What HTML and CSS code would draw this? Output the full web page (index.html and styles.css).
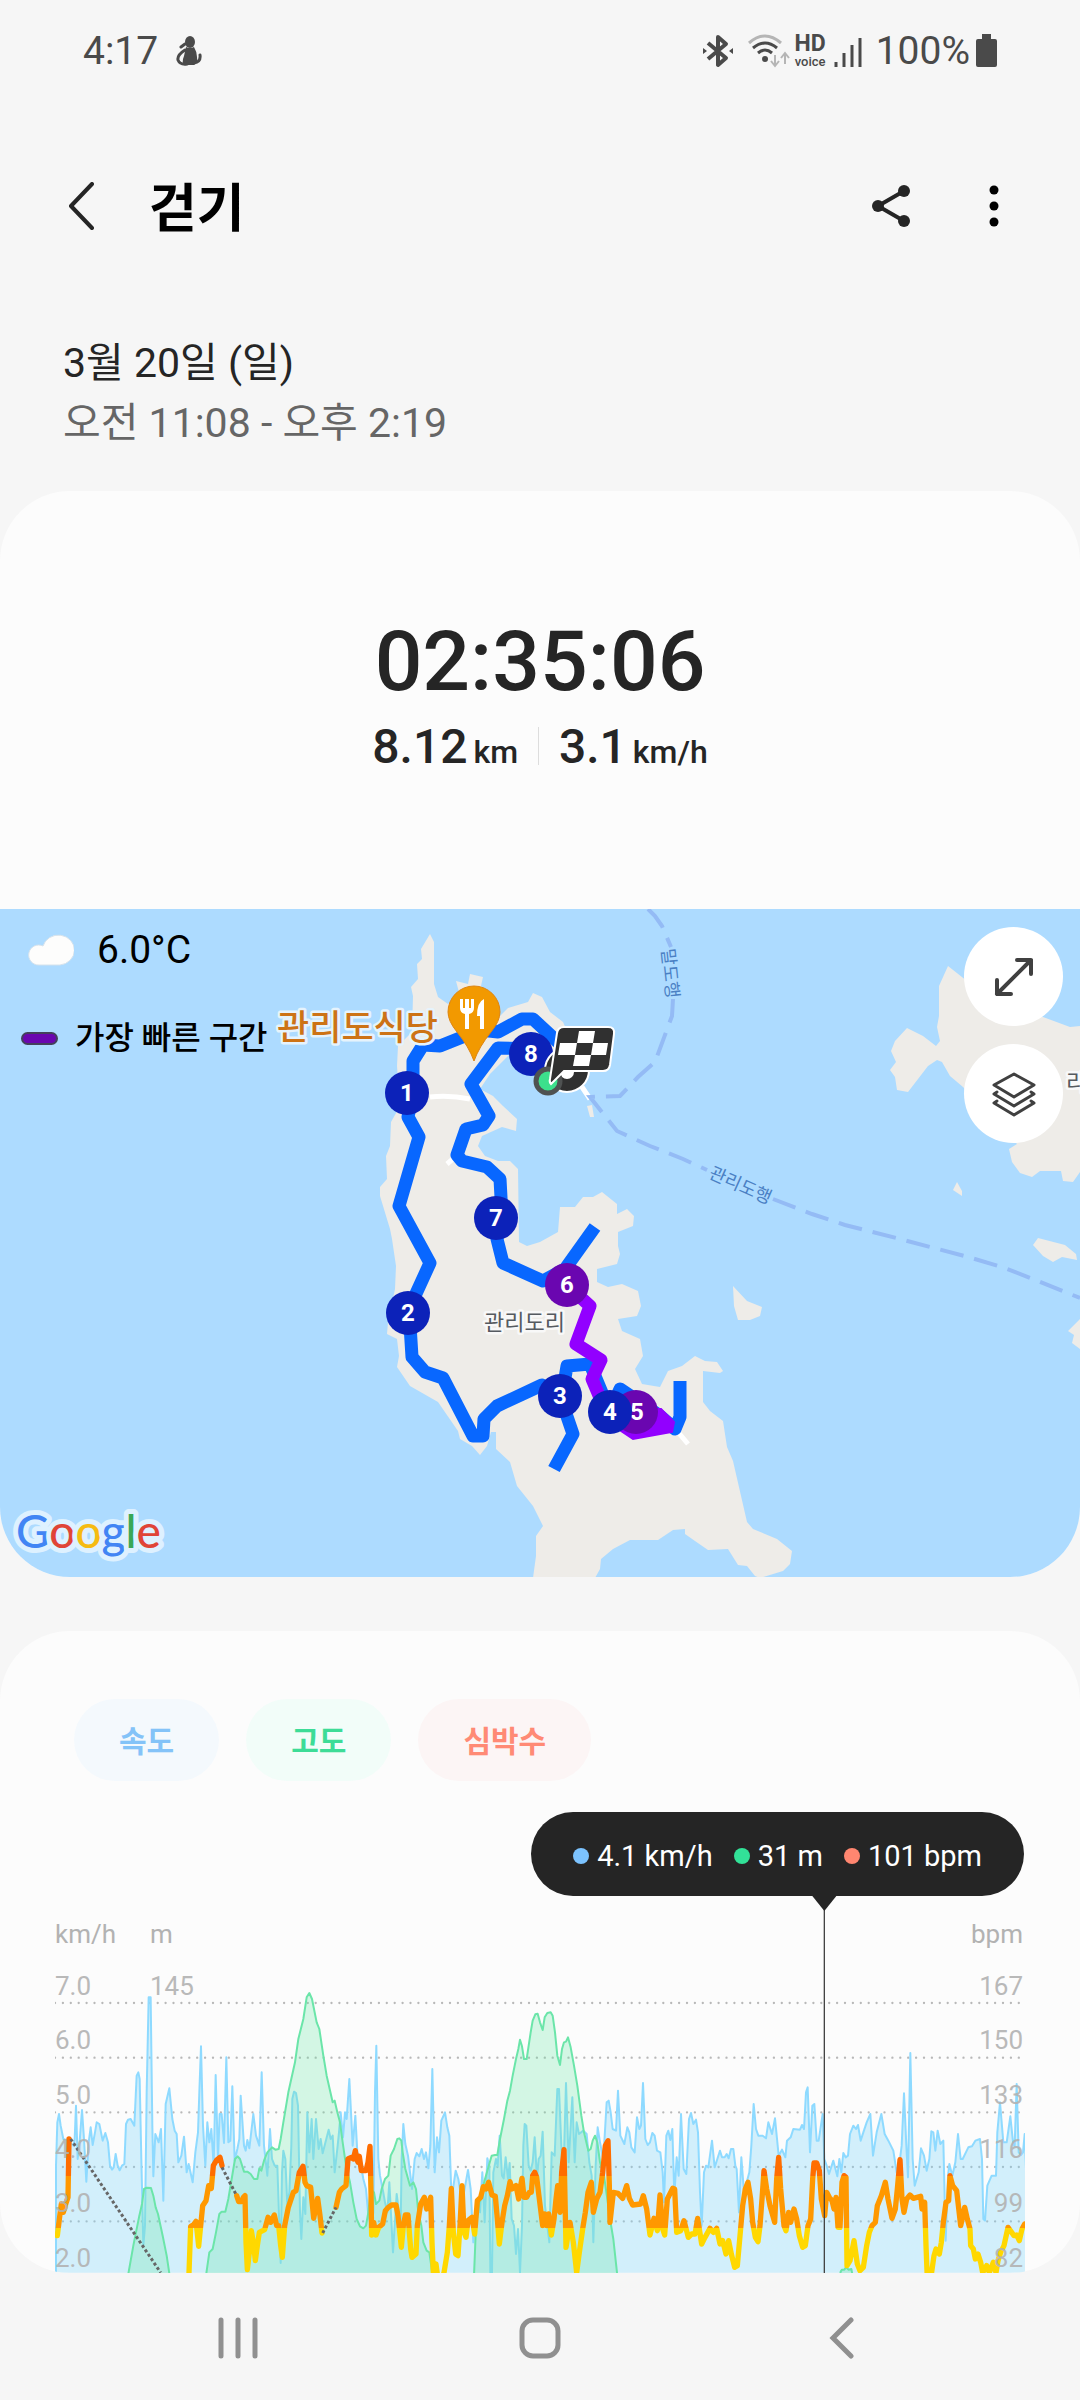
FILE: index.html
```html
<!DOCTYPE html>
<html lang="ko">
<head>
    <meta charset="UTF-8">
    <meta name="viewport" content="width=device-width, initial-scale=1.0">
    <title>걷기</title>
    <link rel="stylesheet" href="styles.css">
</head>
<body>
    <div class="status-bar">
        <div class="status-left">
            <span>4:17</span>
            <svg width="26" height="30" viewBox="0 0 26 30">
                <ellipse cx="14" cy="6" rx="5" ry="6" fill="#4a4a4a"/>
                <path d="M10 11 Q14 13 18 11 Q21 16 21 21 Q22 27 18 29 H9 Q5 27 8 20 Z" fill="#4a4a4a"/>
                <path d="M9 14 Q1 19 2 24 Q4 29 11 28 M9 8 L5 11 M24 19 Q25 26 18 27" fill="none" stroke="#4a4a4a" stroke-width="3" stroke-linecap="round"/>
            </svg>
        </div>
        <div class="status-right">
            <svg width="30" height="34" viewBox="0 0 30 34">
                <path d="M5 9 L23 24 L15 31 V3 L23 10 L5 25" fill="none" stroke="#4a4a4a" stroke-width="4" stroke-linejoin="round"/>
                <path d="M0 14 L4 17 L0 20 Z M30 14 L26 17 L30 20 Z" fill="#4a4a4a"/>
            </svg>
            <svg class="wifi" width="44" height="34" viewBox="0 0 44 34">
                <g fill="none" stroke-width="3">
                    <path d="M2 9 Q18 -5 34 9" stroke="#b5b5b5"/>
                    <path d="M6 14 Q18 4 30 14" stroke="#4a4a4a"/>
                    <path d="M11 19 Q18 13 25 19" stroke="#4a4a4a"/>
                </g>
                <circle cx="18" cy="25" r="3" fill="#4a4a4a"/>
                <path d="M28 21 V31 M24 27 L28 32 L32 27 M38 30 V20 M34 24 L38 19 L42 24" fill="none" stroke="#b5b5b5" stroke-width="2"/>
            </svg>
            <div class="hd"><b>HD</b><span>voice</span></div>
            <svg width="28" height="34" viewBox="0 0 28 34">
                <path d="M2 28 V33 M10 19 V33 M18 11 V33 M26 4 V33" stroke="#4a4a4a" stroke-width="3"/>
            </svg>
            <span class="percent">100%</span>
            <svg width="21" height="34" viewBox="0 0 21 34">
                <path d="M6 0 H15 V5 H19 Q21 5 21 7 V31 Q21 33 19 33 H2 Q0 33 0 31 V7 Q0 5 2 5 H6 Z" fill="#4a4a4a"/>
            </svg>
        </div>
    </div>

    <header class="app-bar">
        <button class="icon-btn" aria-label="뒤로">
            <svg width="26" height="48" viewBox="0 0 26 48">
                <path d="M24 2 L3 24 L24 46" fill="none" stroke="#252525" stroke-width="4" stroke-linecap="round" stroke-linejoin="round"/>
            </svg>
        </button>
        <h1>걷기</h1>
        <button class="icon-btn share" aria-label="공유">
            <svg width="38" height="44" viewBox="0 0 38 44">
                <path d="M32 7 L6 22 L32 37" fill="none" stroke="#252525" stroke-width="4"/>
                <circle cx="32" cy="7" r="6" fill="#252525"/>
                <circle cx="6" cy="22" r="6" fill="#252525"/>
                <circle cx="32" cy="37" r="6" fill="#252525"/>
            </svg>
        </button>
        <button class="icon-btn" aria-label="더보기">
            <svg width="10" height="44" viewBox="0 0 10 44">
                <circle cx="5" cy="6" r="4.5"/>
                <circle cx="5" cy="22" r="4.5"/>
                <circle cx="5" cy="38" r="4.5"/>
            </svg>
        </button>
    </header>

    <div class="date">
        <p>3월 20일 (일)</p>
        <p class="hours">오전 11:08 - 오후 2:19</p>
    </div>

    <main>
        <section class="card">
            <div class="summary">
                <div class="duration">02:35:06</div>
                <div class="stats">
                    <span class="stat">8.12 <small>km</small></span>
                    <span class="stat">3.1 <small>km/h</small></span>
                </div>
            </div>

            <div class="map">
                <svg class="map-img" viewBox="0 0 1080 668">
                    <rect width="1080" height="668" fill="#addbff"/>
                    <!-- Ilhas -->
                    <g fill="#eeece8">
                        <path d="M430 25 L434 33 V75 L438 88 L448 95 L460 87 L456 72 L468 75 L470 65 L483 68 L481 77 L500 107 L508 99 L528 93 L533 84 L542 88 L550 103 L563 113 L575 140 L582 180 L560 175 L535 150 L510 145 L490 165 L480 180 L493 187 L503 197 L517 210 L516 222 L502 218 L482 227 L478 237 L485 247 L498 252 H510 L518 260 L519 333 L527 337 L540 333 L558 323 L560 298 H575 L583 288 H593 L602 283 L617 295 V305 L627 300 L634 307 L633 317 L618 323 V337 L620 345 L617 355 L597 360 V373 L608 378 L622 375 L638 382 L641 397 L637 407 L618 410 L622 422 L640 430 L643 447 L635 460 L642 475 L660 478 L668 462 L682 457 L695 447 L705 452 L717 453 L723 462 L720 464 L703 462 V493 L710 502 L723 512 L727 538 L733 552 L747 613 L753 620 L777 630 L792 642 L790 655 L783 662 L760 669 L755 667 L747 657 L738 656 L728 640 L708 641 L695 632 L685 625 V620 L673 621 L658 631 H630 L613 640 L601 650 L600 660 L595 669 H533 L536 647 V627 L543 617 L533 597 L517 577 L510 553 L496 540 V523 H491 L487 537 L480 546 L472 537 L460 530 L458 522 L438 493 L410 477 L397 458 L399 447 L397 430 L387 425 L388 413 L395 380 L396 357 L392 330 L390 320 L380 287 V278 L387 270 L386 247 L390 237 L391 213 L400 197 L397 157 L398 137 L412 123 L413 87 L411 78 L418 70 L417 55 L422 50 L421 40 Z"/>
                        <path d="M948 57 L967 72 L1043 108 L1070 118 L1080 117 V263 L1073 273 L1063 272 L1061 262 H1040 L1032 268 L1020 264 L1012 253 L1009 240 L1017 235 L963 178 L950 167 L942 153 L937 151 L928 157 L908 183 L897 181 L895 168 L890 161 L896 153 L891 142 L895 132 L907 119 L923 127 L936 137 L940 132 L937 118 L939 107 V77 Z"/>
                        <path d="M957 273 L962 282 V287 L953 281 Z"/>
                        <path d="M1038 329 L1065 336 L1076 345 L1077 351 L1062 348 L1053 353 L1043 347 L1033 336 Z"/>
                        <path d="M733 377 L747 392 L762 398 L760 407 L750 411 H738 L734 397 Z"/>
                        <path d="M587 197 L592 196 L594 208 L590 208 Z"/>
                        <path d="M1080 410 L1068 422 L1074 426 L1072 434 L1080 440 Z"/>
                    </g>
                    <path d="M430 188 Q450 186 470 190 M447 255 L454 249 M582 178 L590 190 M678 523 L688 535" fill="none" stroke="#fff" stroke-width="5"/>
                    <!-- Rotas de barco -->
                    <g fill="none" stroke="#94bbf5" stroke-width="4" stroke-dasharray="24 11">
                        <path d="M648 0 L655 7 L662 17 L671 38"/>
                        <path d="M673 90 L672 107 L655 153 L638 168 L620 187 L590 188 L617 222 L650 237 L683 250 L707 261"/>
                        <path d="M773 290 L812 305 L845 316 L900 330 L968 348 L1002 358 L1033 370 L1080 389"/>
                    </g>
                    <g class="ferry-label">
                        <text transform="translate(664 65) rotate(84)">말도행</text>
                        <text transform="translate(738 282) rotate(24)">관리도행</text>
                    </g>
                    <!-- Trajeto -->
                    <g fill="none" stroke="#0867ff" stroke-width="13" stroke-linejoin="round">
                        <path d="M560 135 L533 110 H522 L498 123 L480 121 L440 137 L423 136 L413 152 V183 L408 208 L419 228 L399 297 L430 354 L409 400 L412 448 L425 463 L443 469 L473 527 H483 L484 510 L497 497 L542 476 L560 487 L573 525 L554 560"/>
                        <path d="M562 487 L567 457 L590 455 L610 503 L620 480 L660 507 L675 520 L680 508 L680 472"/>
                        <path d="M540 140 L498 139 L471 175 L489 207 L483 216 L466 220 L457 246 L462 252 L487 258 L500 270 L502 307 L497 330 L503 354 L543 372 L565 360 L595 318"/>
                    </g>
                    <path d="M567 376 L590 397 L576 435 L601 451 L592 470 L606 503" fill="none" stroke="#9200ff" stroke-width="13" stroke-linejoin="round"/>
                    <path d="M640 500 H661 L674 513 L672 523 L633 530 L618 520 Z" fill="#9200ff" stroke="#9200ff" stroke-width="2"/>

                    <text class="place" x="484" y="421">관리도리</text>
                    <text class="place" x="1066" y="181">리</text>
                    <text class="restaurant" x="277" y="131">관리도식당</text>
                    <path d="M474 152 Q469 138 457 123 Q448 112 448 103 A26 26 0 0 1 500 103 Q500 112 491 123 Q479 138 474 152 Z" fill="#f29900" stroke="#de8512" stroke-width="1"/>
                    <path d="M460 90 V99 Q460 104 465 105 V120 H469 V105 Q474 104 474 99 V90 H471 V99 H469 V90 H465 V99 H463 V90 Z M484 90 Q477 93 477 107 H480 V120 H484 Z" fill="#fff"/>

                    <g class="km">
                        <circle cx="407" cy="184" r="22"/><text x="407" y="192">1</text>
                        <circle cx="408" cy="404" r="22"/><text x="408" y="412">2</text>
                        <circle cx="560" cy="487" r="22"/><text x="560" y="495">3</text>
                        <circle class="fast" cx="636" cy="503" r="22"/><text x="637" y="511">5</text>
                        <circle cx="610" cy="503" r="22"/><text x="610" y="511">4</text>
                        <circle class="fast" cx="567" cy="376" r="22"/><text x="567" y="384">6</text>
                        <circle cx="496" cy="309" r="22"/><text x="496" y="317">7</text>
                        <circle cx="531" cy="145" r="22"/><text x="531" y="153">8</text>
                    </g>

                    <!-- Largada e chegada -->
                    <circle cx="567" cy="161" r="22" fill="#303030" stroke="#fff" stroke-width="2"/>
                    <circle cx="567" cy="163" r="7" fill="#fff"/>
                    <circle cx="548" cy="172" r="12" fill="#3ce08c" stroke="#4f5252" stroke-width="5"/>
                    <path d="M564 118 H608 Q615 118 614 125 L610 156 Q609 162 603 162 H564 L551 175 Q549 173 550 170 L557 124 Q558 118 564 118 Z" fill="#303030" stroke="#fff" stroke-width="2"/>
                    <path d="M579 122 H595 L593 134 H608 L606 146 H591 L589 157 H573 L575 146 H558 L560 134 H577 Z" fill="#fff"/>
                    <path d="M577 134 H593 L591 146 H575 Z" fill="#303030"/>

                    <text class="google" x="16" y="639"><tspan fill="#4285f4">G</tspan><tspan fill="#e04437">o</tspan><tspan fill="#f6bb12">o</tspan><tspan fill="#4285f4">g</tspan><tspan fill="#3aa757">l</tspan><tspan fill="#e04437">e</tspan></text>
                </svg>

                <div class="weather">
                    <svg width="46" height="32" viewBox="0 0 46 32">
                        <path d="M11 31 A10 10 0 1 1 15 12 A16 15 0 1 1 32 31 Z" fill="#fdfdfc" stroke="#d5e2ec" stroke-width="1"/>
                    </svg>
                    <span>6.0°C</span>
                </div>
                <div class="legend"><i></i>가장 빠른 구간</div>

                <div class="map-buttons">
                    <button aria-label="지도 확대">
                        <svg width="40" height="40" viewBox="0 0 40 40">
                            <path d="M23 3 H37 V17 M37 3 L3 37 M3 23 V37 H17" fill="none" stroke="#404040" stroke-width="4" stroke-linecap="round" stroke-linejoin="round"/>
                        </svg>
                    </button>
                    <button aria-label="지도 유형">
                        <svg width="44" height="46" viewBox="0 0 44 46">
                            <path d="M22 3 L42 14 L22 26 L2 14 Z M5 21 L2 23 L22 35 L42 23 L39 21 M5 30 L2 32 L22 44 L42 32 L39 30" fill="none" stroke="#404040" stroke-width="3" stroke-linecap="round" stroke-linejoin="round"/>
                        </svg>
                    </button>
                </div>
            </div>
        </section>

        <section class="card chart-card">
            <div class="chips">
                <button class="chip speed">속도</button>
                <button class="chip altitude">고도</button>
                <button class="chip heart">심박수</button>
            </div>

            <div class="tooltip">
                <span class="speed">4.1 km/h</span>
                <span class="altitude">31 m</span>
                <span class="heart">101 bpm</span>
            </div>

            <div class="chart">
                <svg viewBox="45 -189 2910 1131">
                    <defs>
                        <!-- Zonas de frequência cardíaca -->
                        <linearGradient id="zones" gradientUnits="userSpaceOnUse" x1="0" y1="500" x2="0" y2="950">
                            <stop offset="0.333" stop-color="#ff6d00"/>
                            <stop offset="0.333" stop-color="#ff9800"/>
                            <stop offset="0.68" stop-color="#ff9800"/>
                            <stop offset="0.68" stop-color="#ffd800"/>
                        </linearGradient>
                    </defs>
                    <path class="grid" d="M45 132 H2955 M45 296 H2955 M45 460 H2955 M45 624 H2955 M45 787 H2955"/>
                    <path id="speed"/>
                    <path id="altitude"/>
                    <path id="heart"/>
                    <path class="pause" d="M92 540 L362 941 M546 625 L590 710 M848 822 L888 745"/>
                    <path class="cursor" d="M2353 -150 V942"/>
                    <path class="pointer" d="M2317 -189 H2389 L2353 -144 Z"/>
                </svg>
                <div class="units"><span>km/h</span><span>m</span><span>bpm</span></div>
                <div class="axis left">
                    <span>7.0</span><span>6.0</span><span>5.0</span><span>4.0</span><span>3.0</span><span>2.0</span>
                </div>
                <div class="axis middle"><span>145</span></div>
                <div class="axis right">
                    <span>167</span><span>150</span><span>133</span><span>116</span><span>99</span><span>82</span>
                </div>
            </div>
        </section>
    </main>

    <nav class="nav-bar">
        <button aria-label="최근 앱">
            <svg width="40" height="42" viewBox="0 0 40 42">
                <path d="M3 3 V39 M20 3 V39 M37 3 V39" stroke="#909090" stroke-width="5" stroke-linecap="round"/>
            </svg>
        </button>
        <button aria-label="홈">
            <svg width="42" height="42" viewBox="0 0 42 42">
                <rect x="3" y="3" width="36" height="36" rx="11" fill="none" stroke="#909090" stroke-width="5"/>
            </svg>
        </button>
        <button aria-label="뒤로">
            <svg width="26" height="42" viewBox="0 0 26 42">
                <path d="M22 3 L4 21 L22 39" fill="none" stroke="#909090" stroke-width="5" stroke-linecap="round"/>
            </svg>
        </button>
    </nav>

    <script src="chart.js"></script>
</body>
</html>
```
FILE: styles.css
```css
/* Estilos Gerais */
* {
    box-sizing: border-box;
}

body {
    font-family: Roboto, "Noto Sans CJK KR", sans-serif;
    margin: 0;
    background-color: #f6f6f6;
    color: #252525;
}

button {
    display: flex;
    align-items: center;
    justify-content: center;
    padding: 0;
    border: none;
    background: none;
    font-family: inherit;
    cursor: pointer;
}

svg {
    display: block;
}

h1, p {
    margin: 0;
}

/* Barra de status */
.status-bar {
    display: flex;
    justify-content: space-between;
    align-items: center;
    height: 100px;
    padding: 2px 83px 0;
    font-size: 39px;
    color: #4a4a4a;
}

.status-left, .status-right {
    display: flex;
    align-items: center;
}

.status-left {
    gap: 18px;
}

.wifi {
    margin-left: 14px;
}

.hd {
    display: flex;
    flex-direction: column;
    align-items: center;
    margin: 0 8px 0 3px;
    font-size: 23px;
    line-height: 20px;
}

.hd span {
    font-size: 13px;
    font-weight: 500;
    line-height: 15px;
}

.percent {
    margin: 0 6px 0 14px;
}

/* Cabeçalho */
.app-bar {
    display: flex;
    align-items: center;
    height: 212px;
    padding: 0 81px 0 68px;
}

.app-bar h1 {
    margin-left: 55px;
    padding-top: 8px;
    font-size: 52px;
    font-weight: 700;
    line-height: 60px;
    color: #000;
}

.share {
    margin: 0 79px 0 auto;
}

.date {
    padding: 21px 63px 38px;
    font-size: 41px;
    line-height: 60px;
}

.hours {
    color: #666;
}

/* Cartões */
.card {
    overflow: hidden;
    border-radius: 70px;
    background-color: #fcfcfc;
}

.summary {
    padding: 121px 0 127px;
    text-align: center;
    font-weight: 500;
}

.duration {
    font-size: 84px;
    line-height: 100px;
}

.stats {
    display: flex;
    justify-content: center;
    margin-top: 5px;
    font-size: 48px;
    line-height: 60px;
}

.stat + .stat {
    position: relative;
    margin-left: 41px;
}

.stat + .stat::before {
    content: '';
    position: absolute;
    left: -21px;
    top: 10px;
    width: 1px;
    height: 38px;
    background-color: #ddd;
}

.stat small {
    font-size: 32px;
    margin-left: -6px;
}

/* Mapa */
.map {
    position: relative;
}

.map-img {
    width: 100%;
}

.ferry-label {
    font-size: 18px;
    fill: #4a80c4;
    text-anchor: middle;
}

.place, .restaurant {
    font-size: 22px;
    fill: #555a60;
    stroke: #f8f8f8;
    stroke-width: 5px;
    stroke-linejoin: round;
    paint-order: stroke;
}

.restaurant {
    font-size: 35px;
    font-weight: 500;
    fill: #cd7316;
    stroke: #e6f3fc;
}

.km circle {
    fill: #0c22b9;
}

.km .fast {
    fill: #6a06b0;
}

.km text {
    font-size: 24px;
    font-weight: 700;
    fill: #fff;
    text-anchor: middle;
}

.google {
    font-family: Lato, sans-serif;
    font-size: 46px;
    font-weight: 500;
    stroke: #def1ff;
    stroke-width: 10px;
    stroke-linejoin: round;
    paint-order: stroke;
}

.weather, .legend {
    position: absolute;
    display: flex;
    align-items: center;
    color: #000;
}

.weather {
    top: 18px;
    left: 28px;
    gap: 23px;
    font-size: 39px;
    line-height: 46px;
}

.legend {
    top: 106px;
    left: 21px;
    gap: 17px;
    font-size: 32px;
    font-weight: 500;
    line-height: 46px;
}

.legend i {
    width: 37px;
    height: 13px;
    border: 2px solid #44405c;
    border-radius: 7px;
    background-color: #6a06b0;
}

.map-buttons {
    position: absolute;
    top: 18px;
    right: 17px;
    display: grid;
    gap: 18px;
}

.map-buttons button {
    width: 99px;
    height: 99px;
    border-radius: 50%;
    background-color: #fff;
}

/* Gráfico */
.chart-card {
    margin-top: 54px;
    padding: 68px 55px 0;
}

.chips {
    display: flex;
    gap: 27px;
    margin-left: 19px;
}

.chip {
    height: 82px;
    padding: 0 45px 2px;
    border-radius: 41px;
    font-size: 30px;
    font-weight: 700;
}

.chip.speed {
    background-color: #f4f9fd;
    color: #84c3f8;
}

.chip.altitude {
    background-color: #f2fdf9;
    color: #3ddc97;
}

.chip.heart {
    background-color: #fcf5f5;
    color: #ff8a75;
}

.tooltip {
    display: flex;
    gap: 21px;
    width: max-content;
    height: 84px;
    margin: 31px 1px 0 auto;
    padding: 0 42px;
    border-radius: 42px;
    background-color: #252525;
    color: #fff;
    font-size: 29px;
}

.tooltip span {
    display: flex;
    align-items: center;
    gap: 8px;
    padding-top: 3px;
}

.tooltip span::before {
    content: '';
    width: 16px;
    height: 16px;
    border-radius: 50%;
}

.tooltip .speed::before {
    background-color: #7cc3ff;
}

.tooltip .altitude::before {
    background-color: #32e298;
}

.tooltip .heart::before {
    background-color: #ff8670;
}

.chart {
    position: relative;
    color: #b2b2b2;
    font-size: 26px;
    line-height: 30px;
}

.chart svg {
    width: 100%;
}

.grid {
    stroke: #b8b8b8;
    stroke-width: 7;
    stroke-linecap: round;
    stroke-dasharray: 0 23.7;
}

#speed {
    fill: rgba(125, 213, 250, 0.33);
    stroke: #8edaff;
    stroke-width: 6;
    stroke-linejoin: round;
}

#altitude {
    fill: rgba(105, 230, 165, 0.28);
    stroke: #6be5a9;
    stroke-width: 6;
    stroke-linejoin: round;
}

#heart {
    fill: none;
    stroke: url(#zones);
    stroke-width: 16;
    stroke-linejoin: round;
    stroke-linecap: round;
}

.pause {
    stroke: #666;
    stroke-width: 9;
    stroke-dasharray: 9 7;
}

.cursor {
    stroke: #444;
    stroke-width: 4;
}

.pointer {
    fill: #252525;
}

.units {
    position: absolute;
    top: 23px;
    left: 0;
    right: 2px;
    display: grid;
    grid-template-columns: 95px 1fr auto;
}

.axis {
    position: absolute;
    top: 75px;
    bottom: -24px;
    display: grid;
    grid-template-rows: repeat(6, 1fr);
    opacity: 0.9;
}

.left {
    left: 0;
}

.middle {
    left: 95px;
}

.right {
    right: 2px;
    text-align: right;
}

/* Barra de navegação */
.nav-bar {
    display: grid;
    grid-template-columns: repeat(3, 1fr);
    height: 126px;
    padding: 4px 8% 0;
}
```
FILE: chart.js
```js
// Cada trecho começa em "at"; os pontos são x,y dentro do trecho
const speed = [
    { at: 0, points: '48,941 48,620 52,490 57,465 62,500 70,540 85,545 100,560 104,540 108,440 113,600 118,560 126,453 132,540 139,668 146,550 152,505 158,558 165,520 170,490 178,495 188,545 196,522 204,550 210,620 216,632 221,625 227,585 233,620 239,634 246,620 253,615 258,495 264,482 272,480 283,500 290,350 295,340 299,360 304,600 310,860 315,800 320,400 326,115 332,115 337,500 340,652 346,525 356,550 363,510 370,725 377,435 388,388 397,480 404,515 410,525 415,610 424,590 432,533 440,640 446,615 458,670 466,580 474,520 478,400 483,262 489,500 496,620 502,490 508,550 514,510 521,620 527,348 534,600 539,465 545,465 552,552 559,295 565,550 571,545 577,382 584,605 592,570 598,540 602,410 612,560 617,575 622,543 628,568 640,465 648,530 658,560 665,340 672,560 682,650 690,510 696,600 704,620 712,620 718,800 722,912 726,640 730,575 736,600 742,740 748,700 754,560 757,420 762,398 768,402 774,440 780,760 784,840 790,715 796,765 802,460 808,580 815,480 820,600 828,480 836,570 842,540 848,583 866,512 872,540 878,530 884,640 893,560 897,520 902,460 909,535 915,460 920,480 928,360 938,560 946,470 952,580 960,600 970,660 978,690 985,770 993,800 1000,760 1005,400 1009,260 1015,600 1020,650 1028,690 1035,730 1042,760' },
    { at: 1020, points: '28,670 39,880 50,705 62,800 65,600 70,495 76,555 84,590 90,640 96,690 104,600 110,582 118,592 125,570 132,600 138,580 145,628 151,560 157,330 164,640 171,535 177,580 184,485 195,460 202,505 208,530 214,700 219,690 227,635 235,660 244,715 252,700 264,633 272,690 280,850 285,780 295,720 300,760 307,640 314,790 322,598 328,620 331,941 336,941 340,640 348,600 353,620 359,530 366,650 371,658 377,595 384,660 389,612 395,780 402,800 408,885 414,810 420,941 426,800 430,560 434,495 439,500 446,620 452,635 458,610 464,535 471,660 476,600 482,590 488,518 495,740 502,800 508,850 515,580 524,590 532,390 537,390 544,560 550,660 558,372 566,610 577,415 584,610 590,490 597,525 610,515 620,525 628,610 635,650 640,850 647,620 653,505 660,550 670,600 680,430 686,425 692,460 698,510 708,515 714,395 721,530 733,555 742,505 748,520 754,565 764,580 771,475 778,510 783,500 789,372 796,540 803,558 810,550 817,522 824,530 831,575 841,580 848,640 852,730 859,530 865,515 871,543 877,510 883,710 890,595 896,650 903,465 911,630 919,645 927,480 933,462 940,495 948,482 954,520 960,700 965,800 972,640 978,620 985,625 996,545 1004,625 1012,600' },
    { at: 2040, points: '0,575 6,595 14,595 20,585 26,598 33,570 40,570 46,620 50,630 57,760 64,595 72,700 80,670 88,640 94,560 101,435 108,510 115,530 128,530 138,538 145,490 156,525 165,478 176,590 186,572 196,595 201,545 212,535 220,510 240,512 246,498 252,510 258,400 263,385 270,580 277,440 283,435 290,545 296,545 308,465 313,600 320,620 327,645 340,605 352,652 358,600 364,640 370,582 377,595 384,590 390,525 400,500 408,510 414,498 422,545 430,520 440,490 451,465 459,590 470,520 484,465 494,525 505,545 520,575 530,640 540,600 545,560 552,403 559,560 564,655 571,282 578,600 584,680 596,640 603,568 612,590 620,635 628,600 634,517 640,520 646,575 653,515 661,555 670,545 677,845 684,650 688,615 697,650 706,610 714,525 722,600 728,600 745,565 756,562 766,545 780,540 786,600 790,780 795,785 802,680 815,650 828,650 832,520 840,430 850,550 860,550 871,472 880,558 884,560 890,375 896,580 903,588 909,580 914,525 930,941' }
];

const altitude = [
    { at: 0, points: '264,950 280,860 298,770 306,735 312,690 320,686 333,687 340,710 347,745 354,765 368,830 380,890 389,950 498,950 508,880 518,870 528,820 538,765 545,758 556,758 565,720 575,660 585,600 593,592 600,600 612,638 622,638 632,645 642,660 652,660 658,628 664,635 672,605 682,580 696,565 706,572 716,570 722,540 730,490 745,400 765,310 775,240 790,180 800,115 808,102 816,120 830,190 838,210 850,290 860,350 878,430 884,425 892,460 900,490 908,550 918,620 930,670 940,730 950,780 960,802 970,808 978,800 985,760 992,690 1002,700 1008,735 1018,725 1025,690 1035,660 1045,650 1052,590 1062,570 1072,540 1078,538' },
    { at: 1020, points: '64,545 68,580 76,630 90,680 100,670 108,690 115,760 124,800 130,850 140,875 148,880 158,950 282,950 288,800 298,730 305,700 315,660 325,625 335,590 345,588 352,588 360,540 372,480 382,425 390,395 398,350 408,300 415,270 420,242 426,262 432,300 440,300 446,260 452,220 458,185 466,166 473,164 480,190 488,213 494,175 502,162 512,160 518,170 525,220 532,290 540,318 546,270 552,250 558,248 564,235 572,265 582,320 592,380 604,470 612,520 625,575 632,570 638,545 645,530 652,550 660,610 672,650 682,720 690,780 700,840 712,950' },
    { at: 2040, points: '360,950 362,938 366,932 373,932 378,925 386,932 394,930 398,950' }
];

// Um trecho com "gap" inicia uma nova linha depois da pausa
const heart = [
    { at: 0, points: '52,830 60,765 64,735 70,760 78,732 84,715 87,540' },
    { at: 0, gap: true, points: '447,941 452,802 460,798 468,787 476,862 482,800 488,740 498,725 506,680 514,688 520,620 530,603 540,595 546,620' },
    { at: 0, gap: true, points: '590,710 596,728 605,728 610,715 615,710 618,850 622,932 628,880 634,815 640,850 646,905 652,860 658,820 674,812 684,775 692,790 703,768 710,800 716,800 722,860 727,895 734,800 745,745 760,700 768,695 778,640 789,622 795,670 800,680 812,685 821,778 833,718 840,770 846,822' },
    { at: 0, gap: true, points: '888,745 898,700 905,690 918,680 924,600 934,595 940,600 946,575 950,600 954,610 958,592 964,635 978,635 984,610 990,562 993,700 995,828 1001,790 1008,828 1016,805' },
    { at: 1020, points: '8,795 16,755 25,745 35,738 48,738 54,770 64,865 70,800 76,768 84,768 92,870 96,895 108,885 112,800 122,735 133,715 140,750 152,715 156,850 160,941 168,915 174,960 188,960 192,941 202,880 208,800 214,688 220,820 227,885 234,890 240,800 246,680 252,820 258,835 264,785 276,775 284,825 292,725 302,715 310,683 318,690 326,670 336,708 346,712 352,780 358,855 366,790 374,740 382,710 390,668 396,690 408,680 416,720 420,690 426,658 432,715 440,715 448,700 454,700 458,650 464,640 470,655 478,720 488,800 494,765 500,800 506,765 514,828 522,780 528,720 533,680 540,760 545,640 552,572 558,865 570,790 580,850 590,941 598,880 608,810 616,760 624,700 634,670 640,760 650,720 660,700 668,640 676,560 684,545 688,680 690,790 700,700 714,703 728,718 740,680 748,718 758,738 782,735 790,710 800,750 810,828 822,778 832,815 840,708 848,810 854,828 862,720 878,688 884,690 890,820 902,815 912,785 925,835 935,825 945,825 953,778 965,855 975,835 990,808 1000,820 1010,808' },
    { at: 2040, points: '0,855 8,845 18,885 26,845 34,885 44,925 52,920 60,830 68,740 76,690 84,670 92,720 98,790 106,835 114,848 120,800 126,720 132,635 140,690 150,740 164,790 170,660 176,595 182,690 192,800 198,815 206,760 212,790 222,750 230,780 238,830 248,865 256,860 264,800 272,780 278,660 282,612 290,612 298,635 304,720 314,770 320,700 328,715 336,725 342,750 348,715 354,805 360,805 366,670 372,650 378,655 381,920 390,905 402,845 412,915 420,935 430,925 440,860 448,820 456,800 466,790 472,740 484,710 496,670 504,720 516,778 526,750 532,690 540,602 546,720 552,760 560,720 570,708 580,718 602,712 606,750 614,730 618,860 622,960 632,960 642,890 648,870 658,885 664,850 670,790 678,730 686,725 690,650 698,680 710,695 722,800 734,745 742,780 750,810 752,860 760,870 766,900 774,885 782,910 788,941 800,920 808,941 820,910 828,941 834,905 842,880 852,860 864,805 875,820 882,830 890,828 898,845 906,810 914,795' }
];

function buildPath(parts) {
    return parts.map((part, i) => {
        const points = part.points.split(' ').map(pair => {
            const [x, y] = pair.split(',').map(Number);
            return (x + part.at) + ' ' + y;
        });
        return (i === 0 || part.gap ? 'M' : 'L') + points.join(' L');
    }).join(' ');
}

document.getElementById('speed').setAttribute('d', buildPath(speed));
document.getElementById('altitude').setAttribute('d', buildPath(altitude));
document.getElementById('heart').setAttribute('d', buildPath(heart));
```
